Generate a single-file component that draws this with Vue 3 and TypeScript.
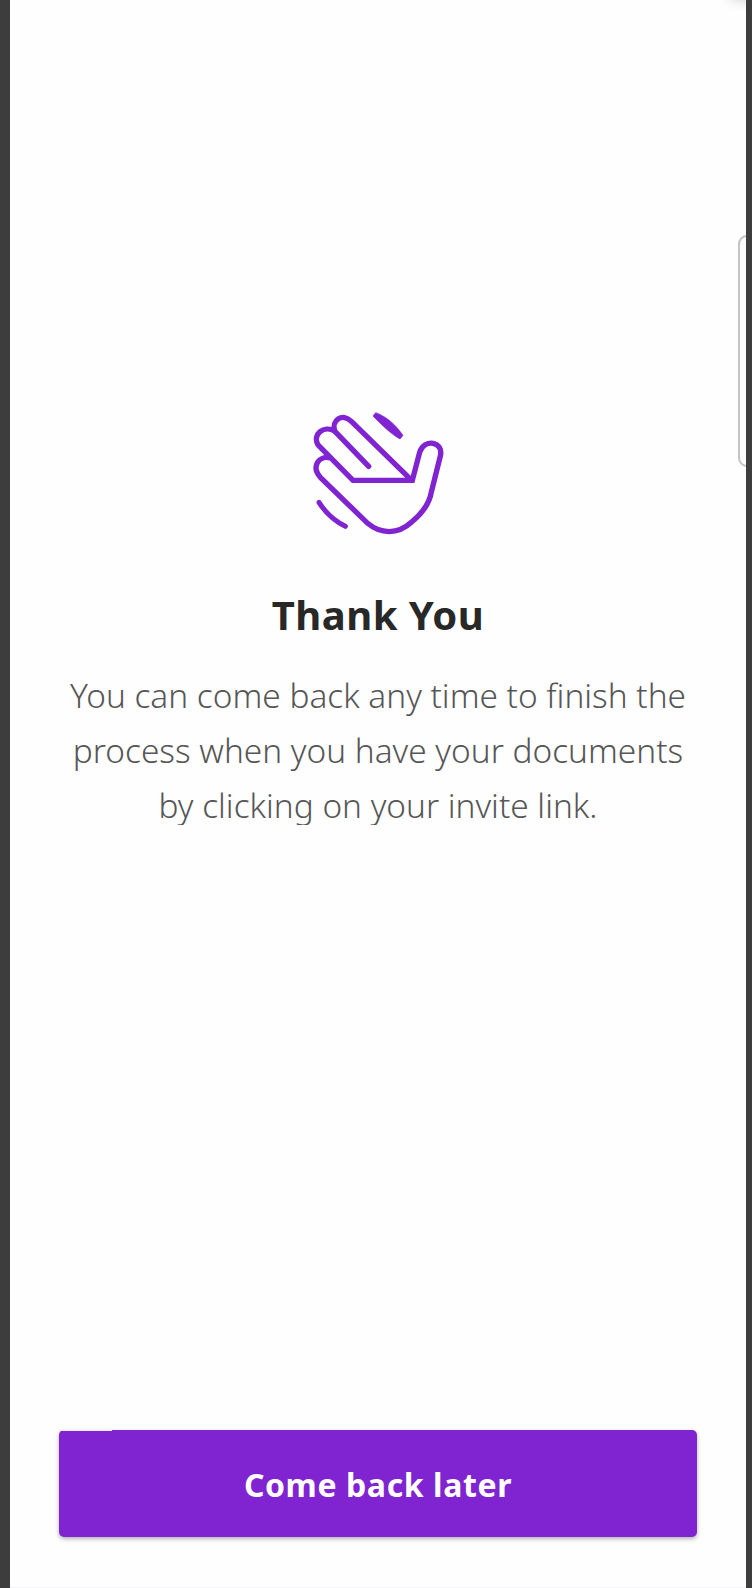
<script setup lang="ts">
const title: string = 'Thank You'
const lines: string[] = [
  'You can come back any time to finish the',
  'process when you have your documents',
  'by clicking on your invite link.',
]
const action: string = 'Come back later'
</script>

<template>
  <main class="screen">
    <span class="corner"></span>
    <span class="edge-handle"></span>
    <svg class="wave" viewBox="0 0 450 435" fill="none" aria-hidden="true">
      <g stroke="#8023d1" stroke-width="16" stroke-linecap="round">
        <path d="M332 238 L155 65 C127 36 94 61 104 93 L206 199" />
        <path d="M104 93 C72 75 36 102 54 135 L159 241 H337 L359 157 C372 114 432 124 421 168 L394 276 C388 313 363 343 335 366 C293 405 241 402 203 370 L61 232 C32 199 58 165 91 174" />
        <path d="M57 307 C80 344 104 363 136 379" stroke-width="15" />
      </g>
      <path d="M219 48 L227 38 C263 51 288 76 309 106 L300 117 C272 101 248 78 219 48Z" fill="#8023d1" stroke="#8023d1" stroke-width="2" stroke-linejoin="round" />
    </svg>
    <h1 class="title">{{ title }}</h1>
    <p class="message">
      <span v-for="line in lines" :key="line" class="line">{{ line }}</span>
    </p>
    <button class="action" type="button">{{ action }}</button>
  </main>
</template>

<style>
body {
  margin: 0;
  background: #fefefe;
}
</style>

<style scoped>
.screen {
  position: relative;
  box-sizing: border-box;
  height: 1588px;
  padding: 400px 49px 51px;
  border-left: 10px solid #3d3d3d;
  border-right: 6px solid #3d3d3d;
  background: #fefefe;
  display: flex;
  flex-direction: column;
  align-items: center;
  overflow: hidden;
  font-family: "Noto Sans", "Open Sans", sans-serif;
  box-shadow: inset 0 -1px #f4f4f7;
}
.corner {
  position: absolute;
  top: -24px;
  right: -16px;
  width: 34px;
  height: 22px;
  border-radius: 50%;
  box-shadow: 0 0 14px 2px rgba(0, 0, 0, 0.2);
}
.edge-handle {
  position: absolute;
  top: 235px;
  right: -12px;
  box-sizing: border-box;
  width: 20px;
  height: 232px;
  border: 2px solid #c3c3c3;
  border-radius: 9px;
}
.wave {
  flex: none;
  width: 150px;
  height: 145px;
  margin-right: 6px;
}
.title {
  margin: 42px 0 0;
  font-size: 40px;
  line-height: 56px;
  font-weight: 700;
  letter-spacing: 0.45px;
  color: #282828;
  white-space: nowrap;
}
.message {
  margin: 25px 0 0;
  height: 157px;
  overflow: hidden;
  font-size: 33.4px;
  line-height: 55px;
  font-weight: 300;
  color: #565656;
  text-align: center;
  white-space: nowrap;
}
.line {
  display: block;
}
.action {
  position: relative;
  width: 638px;
  height: 107px;
  margin: auto 0 0;
  padding: 3px 0 0;
  border: 0;
  border-radius: 5px;
  background: #8023d1;
  box-shadow: 0 2px 4px rgba(0, 0, 0, 0.3);
  color: #fff;
  font: 700 32px/44px "Noto Sans", "Open Sans", sans-serif;
  letter-spacing: 0.6px;
}
.action::before {
  content: "";
  position: absolute;
  top: 0;
  left: 0;
  width: 53px;
  height: 1px;
  background: #f3e6fb;
}
</style>
